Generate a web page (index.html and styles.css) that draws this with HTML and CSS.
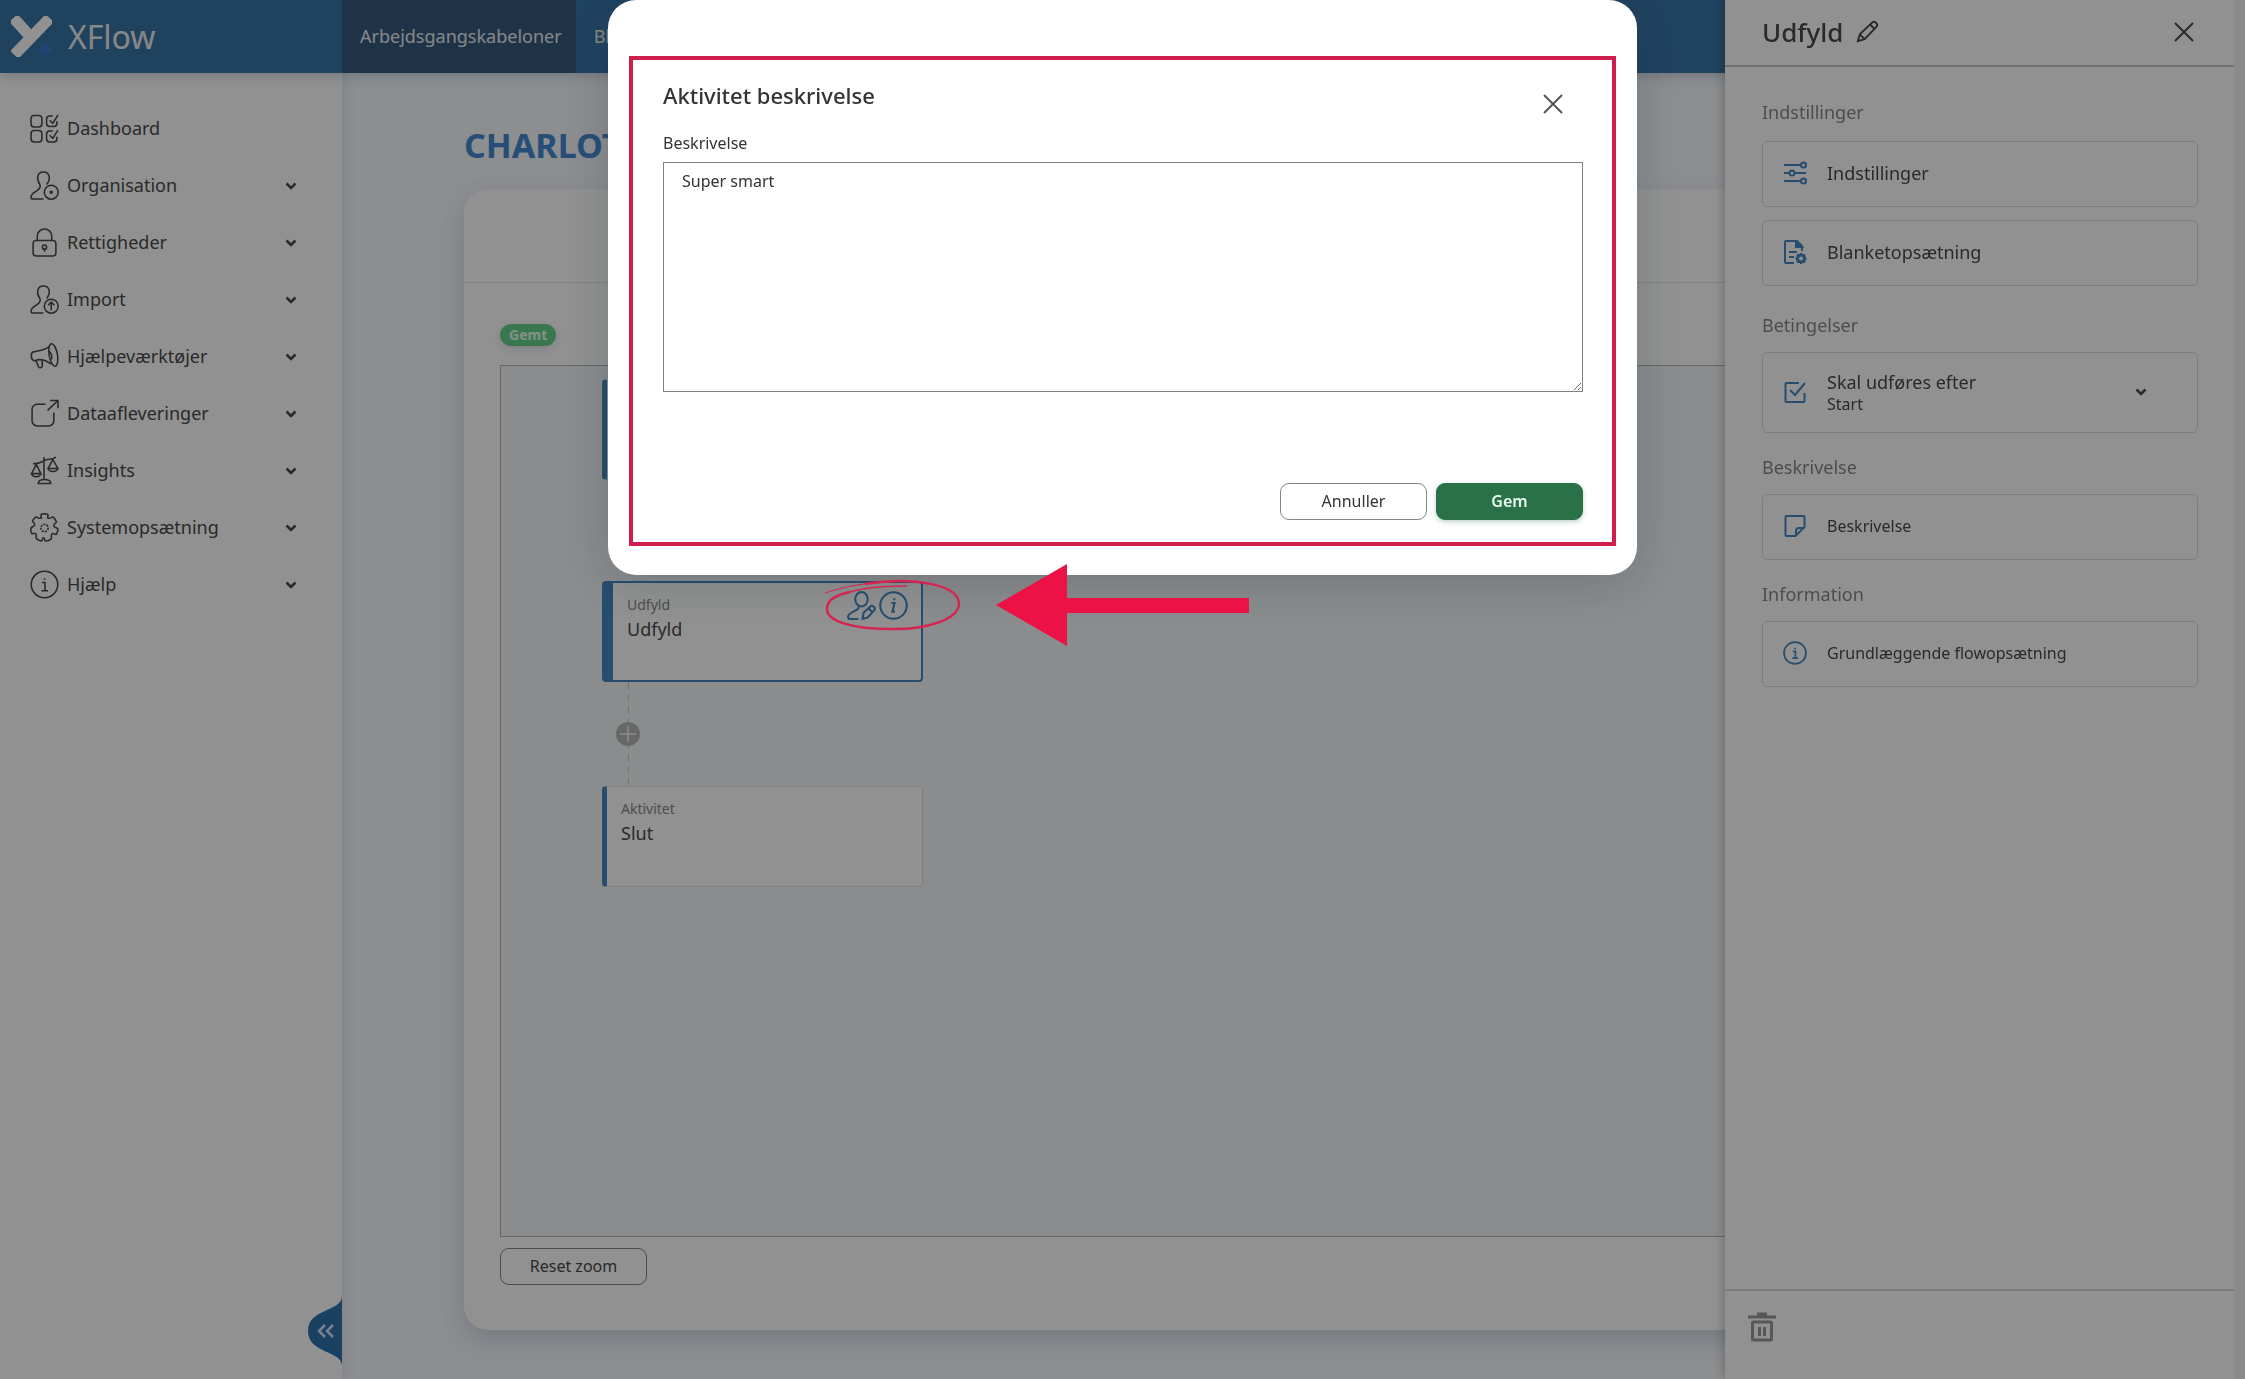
FILE: index.html
```html
<!DOCTYPE html>
<html lang="da">
<head>
    <meta charset="UTF-8">
    <meta name="viewport" content="width=device-width, initial-scale=1.0">
    <title>XFlow - Aktivitet beskrivelse</title>
    <link rel="stylesheet" href="styles.css">
</head>
<body>
    <svg class="symbols" aria-hidden="true">
        <symbol id="chevron" viewBox="0 0 12 10"><path d="M1.5 2.500 6 7l4.500-4.500" stroke-width="2.600"/></symbol>
        <symbol id="info" viewBox="0 0 28 28"><circle cx="14" cy="14" r="12.800"/><path d="M11.500 12h3v8M11 20h6.500M14 8v1.500"/></symbol>
        <symbol id="close" viewBox="0 0 20 20"><path d="M1 1l18 18M19 1 1 19"/></symbol>
    </svg>

    <header class="topbar">
        <a class="brand" href="#">
            <svg class="brand-logo" viewBox="0 0 40 40">
                <path d="M6 6 17 18M34 6 7 34" stroke="#fff" stroke-width="11" fill="none" stroke-linecap="square" stroke-linejoin="round"/>
                <path d="M33 25l7 7.500-7 7.500-7-7.500z" fill="#3d78cc"/>
            </svg>
            <span>XFlow</span>
        </a>
        <nav class="tabs">
            <a class="tab active" href="#">Arbejdsgangskabeloner</a>
            <a class="tab" href="#">Blanketter</a>
        </nav>
    </header>

    <div class="layout">
        <aside class="sidebar">
            <nav class="menu">
                <a class="menu-item" href="#">
                    <svg class="icon" viewBox="0 0 28 28"><rect x="1" y="1.500" width="10.500" height="11" rx="3"/><rect x="1" y="16" width="10.500" height="11" rx="3"/><path d="M22 2h-3a3 3 0 0 0-3 3v4a3 3 0 0 0 3 3h4a3 3 0 0 0 3-3V7M19 6l3 3 5-8M22 16.500h-3a3 3 0 0 0-3 3V24a3 3 0 0 0 3 3h4a3 3 0 0 0 3-3v-2M19 20.500l3 3 5-8"/></svg>
                    <span>Dashboard</span>
                </a>
                <a class="menu-item" href="#">
                    <svg class="icon" viewBox="0 0 28 28"><path d="M16 13c2-2 3-4 2.500-7.500C18 2.500 16 1 13 1S8 2.500 7.500 5.500C7 9 8 11 9.500 13c1.500 3-1 5-3.500 6.500C3 21 1 22.500 1 25.500c0 1 .5 1.500 2 1.500h10"/><circle cx="20.500" cy="20.500" r="6.700"/><circle cx="20.500" cy="20.500" r="1"/></svg>
                    <span>Organisation</span>
                    <svg class="chevron"><use href="#chevron"/></svg>
                </a>
                <a class="menu-item" href="#">
                    <svg class="icon" viewBox="0 0 28 28"><rect x="3" y="12" width="22" height="15" rx="3"/><path d="M7 12V8a7 7 0 0 1 14 0v4M14 19.500v3.500"/><circle cx="14" cy="18.500" r="2"/></svg>
                    <span>Rettigheder</span>
                    <svg class="chevron"><use href="#chevron"/></svg>
                </a>
                <a class="menu-item" href="#">
                    <svg class="icon" viewBox="0 0 28 28"><path d="M16 13c2-2 3-4 2.500-7.500C18 2.500 16 1 13 1S8 2.500 7.500 5.500C7 9 8 11 9.500 13c1.500 3-1 5-3.500 6.500C3 21 1 22.500 1 25.500c0 1 .5 1.500 2 1.500h10"/><circle cx="20.500" cy="20.500" r="6.700"/><path d="M20.500 24.500v-8M17.500 19.500l3-3 3 3"/></svg>
                    <span>Import</span>
                    <svg class="chevron"><use href="#chevron"/></svg>
                </a>
                <a class="menu-item" href="#">
                    <svg class="icon" viewBox="0 0 28 28"><path d="M18.500 4.500C14 8 9 8.500 3.500 9.500c-3 .5-3 7 0 8.500 2 .5 3-1 5-1 4 0 8 1 12 4.500"/><ellipse cx="22.500" cy="12.500" rx="4" ry="11" transform="rotate(-10 22.500 12.500)"/><path d="M18 9c2.500 1 4 5 2.500 8M6 18l2 5.500c.5 2 4 1.500 4-.5l-.5-5"/></svg>
                    <span>Hjælpeværktøjer</span>
                    <svg class="chevron"><use href="#chevron"/></svg>
                </a>
                <a class="menu-item" href="#">
                    <svg class="icon" viewBox="0 0 28 28"><path d="M15 5H7a5 5 0 0 0-5 5v11a5 5 0 0 0 5 5h11a5 5 0 0 0 5-5v-8M17 11 27 1.500M19.500 1.500H27V9"/></svg>
                    <span>Dataafleveringer</span>
                    <svg class="chevron"><use href="#chevron"/></svg>
                </a>
                <a class="menu-item" href="#">
                    <svg class="icon" viewBox="0 0 28 28"><path d="M13.500 1v21M3 7.500c7 0 9-2 12-3.500 3-1.500 6 0 10-3M6 8l-4.500 9h9zM22 3.500 17.500 12h9.500zM1.500 17c1 4 8 4 9 0M17.500 12c1 4 8.500 4 9.500 0M8 26.500c0-5 12-5 12 0z"/></svg>
                    <span>Insights</span>
                    <svg class="chevron"><use href="#chevron"/></svg>
                </a>
                <a class="menu-item" href="#">
                    <svg class="icon" viewBox="0 0 28 28"><path d="M11 4.500c0-1.500-1-2 0-3.200 2-.8 4-.8 6 0 1 1.200 0 1.700 0 3.200 2 2 4-1 5.500-.5 1.500 1.500 2 2.500 3 4.500 0 1.500-3 2-2.500 4 .5 2 3.500 1.500 4 3 0 2-.5 3-1.500 5-1.500.8-2.500-1.500-4-.5-2 1.500 0 3.500-1 5-1.500 1.500-3.500 2-5.500 2-1.500-.5-.5-3-2-3s-.5 2.500-2 3c-2 0-3.500-1-5-2.500-.5-1.500 1-3-.5-4.500S2.500 21 1.500 19.500c-.8-2-1-3-.5-5 .5-1.500 3-1 3.500-3S2 9 2.500 7.500C3.500 5.500 4 5 5.500 4c1.500-.5 3.500 2.500 5.500.5z"/><circle cx="14" cy="14.500" r="3.500" stroke-dasharray="2 1"/></svg>
                    <span>Systemopsætning</span>
                    <svg class="chevron"><use href="#chevron"/></svg>
                </a>
                <a class="menu-item" href="#">
                    <svg class="icon"><use href="#info"/></svg>
                    <span>Hjælp</span>
                    <svg class="chevron"><use href="#chevron"/></svg>
                </a>
            </nav>
            <button class="collapse" aria-label="Skjul menu">
                <svg viewBox="0 0 34 70"><path d="M34 0c0 16-34 12-34 35s34 19 34 35z" fill="#3173ad"/><path d="m17 29-6 6 6 6M25 29l-6 6 6 6" stroke="#d3e4f8" stroke-width="2.500" fill="none"/></svg>
            </button>
        </aside>

        <main class="content">
            <h1>CHARLOTTE</h1>
            <section class="card">
                <div class="card-top"></div>
                <div class="card-body">
                    <span class="badge">Gemt</span>
                    <div class="canvas">
                        <div class="node node-start"></div>
                        <div class="node node-fill selected">
                            <small>Udfyld</small>
                            <strong>Udfyld</strong>
                            <div class="node-icons">
                                <svg class="icon" viewBox="0 0 28 28"><ellipse cx="14" cy="8" rx="6" ry="7"/><path d="M11 14c1 3-1 4-4 5.500S1 22.500 1 25c0 1.500 1 2 2 2h8M15 27l1-6 7-6.500c2-1 5 2 3.500 4L20 25.500zM21 17l3.500 3.500"/></svg>
                                <svg class="icon" viewBox="0 0 28 28"><circle cx="14" cy="14" r="12.800"/><path d="M12 11.500h3l-2 8.500h2.500M15 7l-.5 2"/></svg>
                            </div>
                        </div>
                        <div class="connector">
                            <button class="add" aria-label="Tilføj aktivitet"><svg viewBox="0 0 24 24"><path d="M12 4v16M4 12h16"/></svg></button>
                        </div>
                        <div class="node node-end">
                            <small>Aktivitet</small>
                            <strong>Slut</strong>
                        </div>
                    </div>
                    <button class="btn btn-reset">Reset zoom</button>
                </div>
            </section>
        </main>
    </div>

    <aside class="panel">
        <div class="panel-header">
            <h2>Udfyld</h2>
            <svg class="pencil" viewBox="0 0 24 24"><path d="m2 22 2-7L17 2.500c2.500-2 6.500 2 4.500 4.500L9 20zM15 5l4.500 4.500M4 15l5 5"/></svg>
            <button class="icon-btn" aria-label="Luk panel"><svg class="close"><use href="#close"/></svg></button>
        </div>
        <div class="panel-body">
            <h3>Indstillinger</h3>
            <button class="option">
                <svg class="icon-blue" viewBox="0 0 24 24"><path d="M1 4h17M1 12h5M12 12h11M1 20h17"/><circle cx="20.500" cy="4" r="2.500"/><circle cx="9" cy="12" r="2.500"/><circle cx="20.500" cy="20" r="2.500"/></svg>
                <span>Indstillinger</span>
            </button>
            <button class="option">
                <svg class="icon-blue" viewBox="0 0 24 24"><path d="M11 23H3a1 1 0 0 1-1-1V2a1 1 0 0 1 1-1h11l5 5v5M6 12h8M6 17h5"/><path d="M13 1v6h6z" fill="currentColor"/><circle cx="18" cy="18.500" r="3.500" stroke-width="3"/><path d="M18 13v2M18 22v2M12.500 18.500h2M21.500 18.500h2M14 14.500l1.500 1.500M20.500 21l1.500 1.500M22 14.500 20.500 16M15.500 21 14 22.500"/></svg>
                <span>Blanketopsætning</span>
            </button>
            <h3>Betingelser</h3>
            <button class="option option-tall">
                <svg class="icon-blue" viewBox="0 0 24 24"><path d="M16 3H3.500a1 1 0 0 0-1 1v17a1 1 0 0 0 1 1h17a1 1 0 0 0 1-1v-8M7 10l5 5L22 3"/></svg>
                <span>Skal udføres efter<small>Start</small></span>
                <svg class="chevron"><use href="#chevron"/></svg>
            </button>
            <h3>Beskrivelse</h3>
            <button class="option option-small">
                <svg class="icon-blue" viewBox="0 0 24 24"><path d="M3.500 2h17a1 1 0 0 1 1 1v10l-9 9h-9a1 1 0 0 1-1-1V3a1 1 0 0 1 1-1zM13 22v-5a3 3 0 0 1 3-3h5"/></svg>
                <span>Beskrivelse</span>
            </button>
            <h3>Information</h3>
            <button class="option option-small">
                <svg class="icon-blue" viewBox="0 0 28 28"><use href="#info"/></svg>
                <span>Grundlæggende flowopsætning</span>
            </button>
        </div>
        <div class="panel-footer">
            <button class="icon-btn" aria-label="Slet">
                <svg class="trash" viewBox="0 0 28 30"><path d="M0 5h28M9 2h10" stroke-width="3"/><rect x="4.500" y="10" width="19" height="18" rx="1" stroke-width="3"/><path d="M11.500 15v9M16.500 15v9" stroke-width="3"/></svg>
            </button>
        </div>
    </aside>

    <div class="overlay">
        <div class="modal" role="dialog" aria-labelledby="modal-title">
            <form class="modal-frame">
                <div class="modal-header">
                    <h2 id="modal-title">Aktivitet beskrivelse</h2>
                    <button type="button" class="icon-btn" aria-label="Luk"><svg class="close"><use href="#close"/></svg></button>
                </div>
                <label for="beskrivelse">Beskrivelse</label>
                <textarea id="beskrivelse">Super smart</textarea>
                <div class="modal-actions">
                    <button type="button" class="btn">Annuller</button>
                    <button type="button" class="btn btn-save">Gem</button>
                </div>
            </form>
        </div>
    </div>

    <!-- Markering af ikonerne på aktiviteten -->
    <svg class="marker" viewBox="0 0 424 84">
        <path d="M0 30C20 23 45 19 68 19" fill="none" stroke="#d62450" stroke-width="1"/>
        <path d="M40 21C90 13 134 22 134 41 133 57 100 67 65 66 30 66 2 59 2 46 2 36 12 32 25 29" fill="none" stroke="#d62450" stroke-width="2.500"/>
        <path d="M25 29C42 24 60 23 82 23" fill="none" stroke="#d62450" stroke-width="1.500"/>
        <path d="M171 42 242 1v34h182v15H242v33z" fill="#ec1246"/>
    </svg>
</body>
</html>
```
FILE: styles.css
```css
:root {
    --primary-color: #3875a8;
    --active-color: #355b7e;
    --accent-color: #4388c0;
    --title-color: #468ad2;
    --text-color: #4a4a4a;
    --muted-color: #888;
    --border-color: #dcdcdc;
    --marker-color: #d01f4e;
    --save-color: #2a7148;
}

* {
    margin: 0;
    padding: 0;
    box-sizing: border-box;
}

body {
    font-family: 'Noto Sans', 'Open Sans', sans-serif;
    font-size: 16px;
    color: var(--text-color);
    min-height: 100vh;
    display: flex;
    flex-direction: column;
    overflow: hidden;
}

button {
    font: inherit;
    color: inherit;
    background: none;
    border: none;
    cursor: pointer;
}

a {
    color: inherit;
    text-decoration: none;
}

svg {
    display: block;
    flex: none;
    fill: none;
    stroke: currentColor;
    stroke-width: 1.5;
}

.symbols {
    position: absolute;
    width: 0;
    height: 0;
}

/* Topbar */
.topbar {
    height: 73px;
    display: flex;
    background: var(--primary-color);
    color: #eee;
    box-shadow: 0 2px 12px rgba(30, 60, 100, 0.25);
    position: relative;
    z-index: 1;
}

.brand {
    width: 342px;
    padding-left: 11px;
    display: flex;
    align-items: center;
    gap: 16px;
    font-size: 32px;
}

.brand-logo {
    width: 41px;
    height: 41px;
    stroke: none;
}

.tabs {
    display: flex;
}

.tab {
    display: flex;
    align-items: center;
    padding: 0 14px 2px 18px;
    font-size: 18px;
}

.tab.active {
    background: var(--active-color);
}

/* Sidebar */
.layout {
    flex: 1;
    display: flex;
}

.sidebar {
    width: 342px;
    padding: 27px 45px 0 30px;
    background: white;
    box-shadow: 0 0 14px rgba(60, 90, 130, 0.15);
    position: relative;
}

.menu-item {
    height: 57px;
    display: flex;
    align-items: center;
    gap: 8px;
    font-size: 18px;
}

.menu-item span {
    padding-bottom: 2px;
}

.icon {
    width: 29px;
    height: 29px;
}

.chevron {
    width: 12px;
    height: 10px;
    margin-left: auto;
}

.collapse {
    position: absolute;
    right: 0;
    bottom: 13px;
}

.collapse svg {
    width: 34px;
    height: 70px;
    stroke: none;
}

/* Indhold */
.content {
    flex: 1;
    display: flex;
    flex-direction: column;
    padding: 48px 122px 49px;
    background: #f6f9fd;
}

h1 {
    font-size: 34px;
    line-height: 48px;
    margin-bottom: 20px;
    color: var(--title-color);
}

.card {
    flex: 1;
    display: flex;
    flex-direction: column;
    background: white;
    border-radius: 24px;
    box-shadow: 0 10px 24px rgba(60, 80, 120, 0.2);
}

.card-top {
    height: 94px;
    border-bottom: 1px solid #e4e4e4;
}

.card-body {
    flex: 1;
    display: flex;
    flex-direction: column;
    align-items: flex-start;
    padding: 41px 36px 45px;
}

.badge {
    height: 22px;
    padding: 0 9px;
    border-radius: 11px;
    background: #64d48c;
    color: #e8ffee;
    font-size: 14px;
    font-weight: 700;
    line-height: 21px;
    box-shadow: 0 3px 8px rgba(0, 0, 0, 0.12);
}

.canvas {
    position: relative;
    flex: 1;
    align-self: stretch;
    margin: 19px 0 11px;
    border: 1px solid #b0b4b8;
    background: #f2f6f8;
}

.node {
    position: absolute;
    left: 101px;
    width: 321px;
    height: 101px;
    padding: 12px 14px;
    background: white;
    border: 1px solid #dfe1e3;
    border-left: 5px solid var(--accent-color);
    border-radius: 4px;
}

.node.selected {
    border: 2px solid var(--accent-color);
    border-left-width: 11px;
}

.node-start {
    top: 13px;
}

.node-fill {
    top: 215px;
}

.node-end {
    top: 420px;
}

.node small,
.node strong {
    display: block;
    line-height: 20px;
}

.node small {
    font-size: 14px;
    color: var(--muted-color);
}

.node strong {
    font-size: 18px;
    font-weight: 400;
    line-height: 28px;
}

.node-icons {
    position: absolute;
    top: 8px;
    right: 13px;
    display: flex;
    gap: 3px;
    color: var(--accent-color);
}

.node-icons .icon {
    stroke-width: 2;
}

.connector {
    position: absolute;
    left: 115px;
    top: 316px;
    height: 104px;
    width: 24px;
    display: flex;
    align-items: center;
    background: repeating-linear-gradient(#ccc 0 7px, transparent 7px 12px) center / 1px 100% no-repeat;
}

.add {
    width: 24px;
    height: 24px;
    border-radius: 50%;
    background: #b5b8b8;
    color: #f4f4f4;
}

.btn {
    width: 147px;
    height: 37px;
    padding-bottom: 2px;
    border: 1px solid #858585;
    border-radius: 9px;
    background: white;
    font-size: 16px;
}

/* Højre panel */
.panel {
    position: fixed;
    top: 0;
    right: 0;
    bottom: 0;
    z-index: 2;
    width: 520px;
    display: flex;
    flex-direction: column;
    background: white;
    border-right: 11px solid #f3f3f3;
    box-shadow: 0 0 12px rgba(0, 0, 0, 0.3);
}

.panel-header {
    height: 67px;
    padding: 0 40px 2px 37px;
    display: flex;
    align-items: center;
    gap: 13px;
    border-bottom: 2px solid #c4c4c4;
}

.panel-header h2 {
    font-size: 26px;
    font-weight: 500;
}

.pencil {
    width: 23px;
    height: 23px;
    stroke-width: 2;
}

.icon-btn {
    margin-left: auto;
}

.close {
    width: 20px;
    height: 20px;
    stroke-width: 2;
}

.panel-body {
    flex: 1;
    padding: 24px 36px 0 37px;
}

h3 {
    margin: 8px 0 16px;
    font-size: 18px;
    font-weight: 400;
    line-height: 26px;
    color: var(--muted-color);
}

.option {
    width: 100%;
    height: 66px;
    margin-bottom: 13px;
    padding: 0 50px 2px 20px;
    display: flex;
    align-items: center;
    gap: 20px;
    border: 1px solid var(--border-color);
    border-radius: 5px;
    font-size: 18px;
    text-align: left;
}

.option + h3 {
    margin-top: 26px;
    margin-bottom: 14px;
}

.option-tall + h3,
.option-small + h3 {
    margin-top: 21px;
}

.option-tall {
    height: 81px;
}

.option small {
    display: block;
    font-size: 16px;
    line-height: 20px;
}

.option-small {
    font-size: 16px;
}

.icon-blue {
    width: 24px;
    height: 24px;
    color: var(--accent-color);
    stroke-width: 2;
}

.panel-footer {
    height: 90px;
    padding: 21px 23px;
    display: flex;
    align-items: flex-start;
    border-top: 2px solid var(--border-color);
}

.panel-footer .icon-btn {
    margin-left: 0;
}

.trash {
    width: 28px;
    height: 30px;
    color: #999;
}

/* Modal */
.overlay {
    position: fixed;
    inset: 0;
    z-index: 3;
    display: flex;
    justify-content: center;
    align-items: flex-start;
    background: rgba(0, 0, 0, 0.43);
}

.modal {
    width: 1029px;
    max-width: 90%;
    padding: 56px 21px 29px;
    background: white;
    border-radius: 28px;
    box-shadow: 0 8px 50px rgba(20, 40, 50, 0.2);
    color: #333;
}

.modal-frame {
    padding: 20px 29px 22px 30px;
    border: 4px solid var(--marker-color);
}

.modal-header {
    display: flex;
    align-items: flex-start;
    justify-content: space-between;
    height: 51px;
}

.modal-header h2 {
    font-size: 22px;
    font-weight: 500;
    line-height: 30px;
}

.modal-header .icon-btn {
    padding: 14px 20px 0;
    color: #555;
}

label {
    display: block;
    line-height: 24px;
    margin-bottom: 7px;
}

textarea {
    display: block;
    width: 100%;
    height: 230px;
    padding: 6px 18px;
    border: 1px solid #808080;
    font: inherit;
    line-height: 24px;
    color: inherit;
    resize: vertical;
    outline: none;
}

.modal-actions {
    display: flex;
    justify-content: flex-end;
    gap: 9px;
    margin-top: 91px;
}

.btn-save {
    border-color: var(--save-color);
    background: var(--save-color);
    color: #e6fbee;
    font-weight: 600;
    box-shadow: 0 2px 5px rgba(40, 110, 70, 0.3);
}

/* Pil og cirkel */
.marker {
    position: absolute;
    left: 825px;
    top: 563px;
    z-index: 4;
    width: 424px;
    height: 84px;
    stroke: none;
}
```
